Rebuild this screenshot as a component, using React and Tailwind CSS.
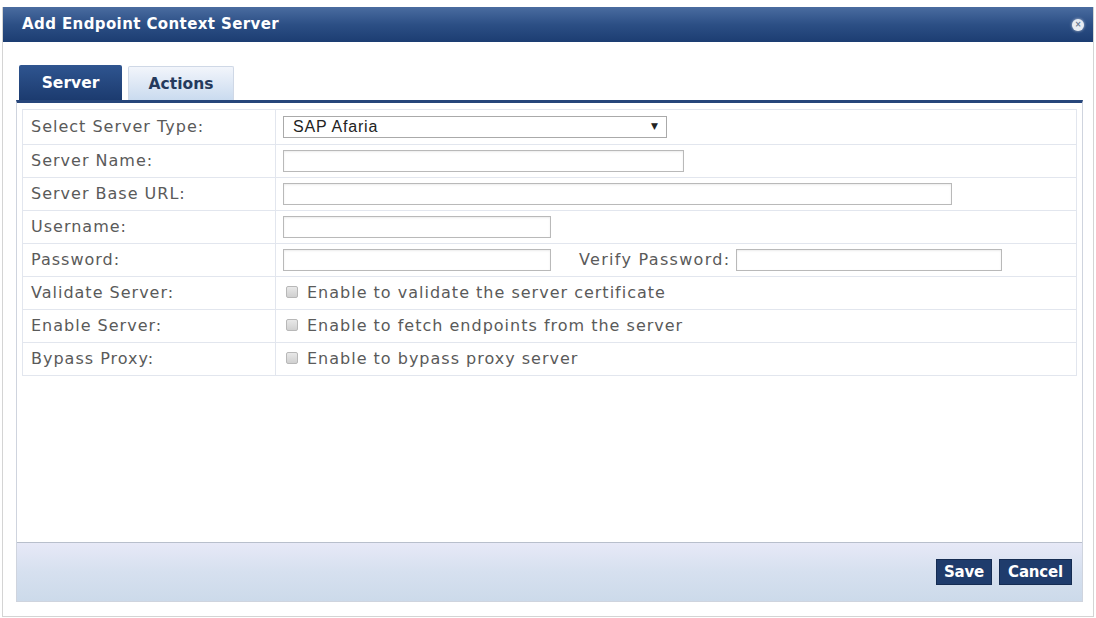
import React from "react";

const labelFont = { fontFamily: '"DejaVu Sans", Verdana, sans-serif' };

function Row({ label, children, first }) {
  return (
    <div className={`flex border-b border-[#e2e6ee] ${first ? "h-[35px]" : "h-[33px]"}`}>
      <div className="w-[253px] shrink-0 border-r border-[#e2e6ee] pl-[8px] flex items-center text-[16px] tracking-[1px] text-[#5a5a5a]">
        {label}
      </div>
      <div className="flex-1 flex items-center pl-[7px]">{children}</div>
    </div>
  );
}

function TextInput({ w }) {
  return (
    <div
      className={`${w} h-[22px] shrink-0 bg-white border border-[#b9b9b9] shadow-[inset_0_1px_2px_rgba(0,0,0,0.08)]`}
    />
  );
}

function Check({ text }) {
  return (
    <div className="flex items-center gap-[9px] pl-[3px]">
      <div className="w-[12px] h-[12px] -mt-[3px] rounded-[2px] border border-[#b8b8b8] bg-gradient-to-b from-[#e8e8e8] to-[#d0d0d0]" />
      <span className="text-[16px] tracking-[1px] text-[#5a5a5a]">{text}</span>
    </div>
  );
}

export default function App() {
  return (
    <div className="w-[1096px] h-[618px] bg-white pt-[7px] overflow-hidden" style={labelFont}>
      <div className="mx-[2px] h-[610px] border-x border-b border-[#d4d4d4] flex flex-col">
        {/* header */}
        <div className="h-[35px] shrink-0 bg-gradient-to-b from-[#4a6ca0] via-[#2c4f85] to-[#1c3d72] flex items-center justify-between pl-[19px] pr-[9px]">
          <span className="text-white font-bold text-[15px] tracking-[0.4px]">Add Endpoint Context Server</span>
          <div className="w-[12px] h-[12px] rounded-full bg-[#e8ecf2] flex items-center justify-center shadow-[0_0_3px_rgba(255,255,255,0.7)]">
            <span className="text-[8px] leading-none text-[#6a7a90] font-bold">×</span>
          </div>
        </div>

        {/* body */}
        <div className="flex-1 flex flex-col pt-[23px] pl-[13px] pr-[10px] pb-[14px]">
          {/* tabs */}
          <div className="h-[35px] flex items-end gap-[6px] pl-[3px]">
            <div className="w-[103px] h-[35px] rounded-t-[2px] bg-gradient-to-b from-[#2f5590] to-[#1c3b6f] flex items-center justify-center pt-[2px]">
              <span className="text-white font-bold text-[15.5px]">Server</span>
            </div>
            <div className="w-[106px] h-[34px] rounded-t-[2px] border border-b-0 border-[#cfd8e6] bg-gradient-to-b from-[#f2f5fb] to-[#cadbef] flex items-center justify-center pt-[2px]">
              <span className="text-[#253a5c] font-bold text-[15.5px]">Actions</span>
            </div>
          </div>

          {/* panel */}
          <div className="flex-1 flex flex-col border-t-[3px] border-t-[#27467b] border-x border-b border-x-[#cfd4de] border-b-[#cfd4de]">
            <div className="flex-1 pt-[6px] px-[5px]">
              <div className="border border-[#e2e6ee] border-b-0">
                <Row label="Select Server Type:" first>
                  <div className="w-[384px] h-[22px] border border-[#aaaaaa] bg-white flex items-center justify-between pl-[9px] pr-[8px]">
                    <span className="text-[16px] tracking-[0.8px] text-[#222]" style={{ fontFamily: '"Liberation Sans", Arial, sans-serif' }}>
                      SAP Afaria
                    </span>
                    <span className="text-[9px] text-[#222]">▼</span>
                  </div>
                </Row>
                <Row label="Server Name:">
                  <TextInput w="w-[401px]" />
                </Row>
                <Row label="Server Base URL:">
                  <TextInput w="w-[669px]" />
                </Row>
                <Row label="Username:">
                  <TextInput w="w-[268px]" />
                </Row>
                <Row label="Password:">
                  <TextInput w="w-[268px]" />
                  <span className="ml-[28px] mr-[6px] text-[16px] tracking-[1.3px] text-[#5a5a5a] whitespace-nowrap">Verify Password:</span>
                  <TextInput w="w-[266px]" />
                </Row>
                <Row label="Validate Server:">
                  <Check text="Enable to validate the server certificate" />
                </Row>
                <Row label="Enable Server:">
                  <Check text="Enable to fetch endpoints from the server" />
                </Row>
                <Row label="Bypass Proxy:">
                  <Check text="Enable to bypass proxy server" />
                </Row>
              </div>
            </div>

            {/* footer */}
            <div className="h-[59px] shrink-0 border-t border-[#b8bfcc] bg-gradient-to-b from-[#e7e9f7] via-[#d6e0ef] to-[#ccdaea] flex items-center justify-end gap-[7px] pr-[10px]">
              <div className="w-[56px] h-[26px] bg-[#1f3c6c] border border-[#152c52] flex items-center justify-center">
                <span className="text-white font-bold text-[15px] tracking-[-0.2px]">Save</span>
              </div>
              <div className="w-[73px] h-[26px] bg-[#1f3c6c] border border-[#152c52] flex items-center justify-center">
                <span className="text-white font-bold text-[15px] tracking-[-0.2px]">Cancel</span>
              </div>
            </div>
          </div>
        </div>
      </div>
    </div>
  );
}
